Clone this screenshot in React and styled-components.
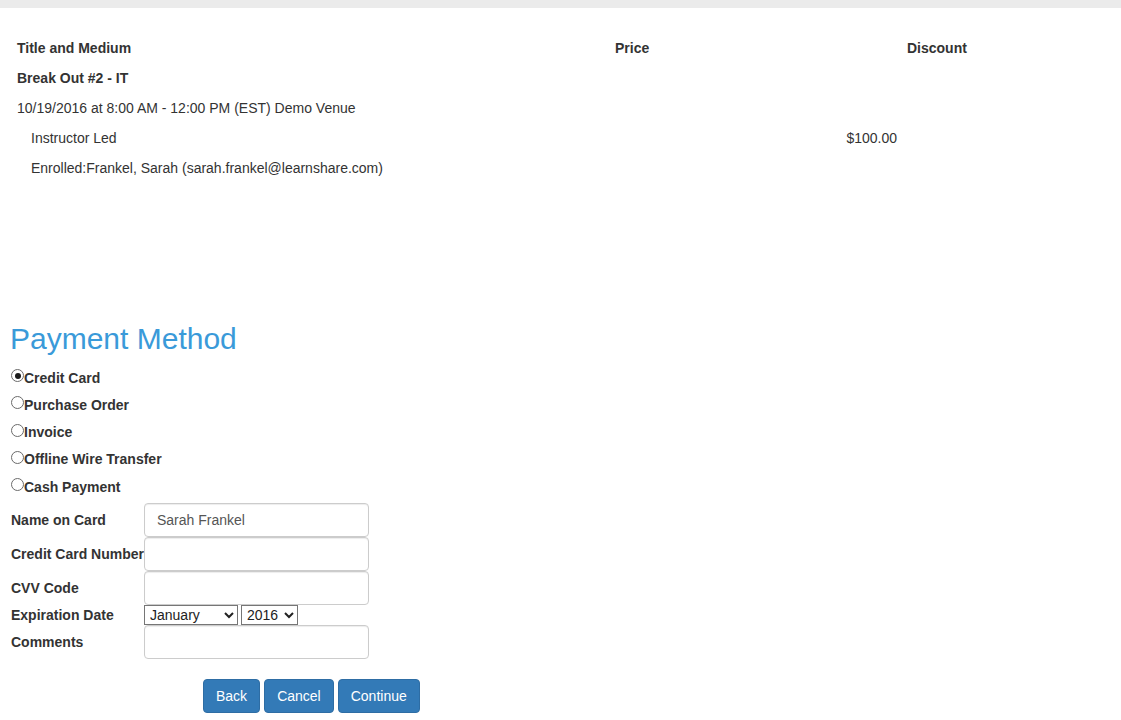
import React, { useState } from 'react'
import styled, { createGlobalStyle } from 'styled-components'

const GlobalStyle = createGlobalStyle`
  html, body {
    margin: 0;
    padding: 0;
    background: #fff;
  }
  body {
    font-family: "Liberation Sans", Arial, sans-serif;
    font-size: 14px;
    color: #333;
  }
`

const TopBar = styled.div`
  height: 8px;
  background-color: #ebebeb;
`

const Page = styled.div`
  padding: 25px 10px 0 10px;
`

const OrderTable = styled.div`
  display: grid;
  grid-template-columns: 598px 292px 1fr;
`

const Cell = styled.div`
  height: 30px;
  line-height: 30px;
  padding: 0 ${(p) => (p.right ? '3px' : '7px')};
  padding-left: ${(p) => (p.indent ? '21px' : p.right ? '0' : '7px')};
  font-weight: ${(p) => (p.bold ? 'bold' : 'normal')};
  text-align: ${(p) => (p.right ? 'right' : 'left')};
  white-space: nowrap;
`

const Heading = styled.h3`
  margin: 139px 0 0 0;
  font-size: 30px;
  font-weight: normal;
  line-height: 33px;
  color: #3a9ad9;
`

const RadioList = styled.div`
  margin-top: 9px;
  display: flex;
  flex-direction: column;
`

const RadioRow = styled.label`
  display: flex;
  align-items: center;
  height: 27.25px;
  font-weight: bold;
  cursor: pointer;
`

const Radio = styled.input`
  appearance: none;
  width: 13px;
  height: 13px;
  margin: 0 0 0 1px;
  border: 1px solid #6b6b6b;
  border-radius: 50%;
  background: #fff;
  position: relative;
  top: -2px;
  box-sizing: border-box;
  &:checked::after {
    content: '';
    position: absolute;
    left: 2.5px;
    top: 2.5px;
    width: 6px;
    height: 6px;
    border-radius: 50%;
    background: #1a1a1a;
  }
`

const FormGrid = styled.div`
  margin-top: 3px;
  display: grid;
  grid-template-columns: 134px 225px;
  align-items: center;
`

const FieldLabel = styled.div`
  padding-left: 1px;
  font-weight: bold;
  white-space: nowrap;
`

const TextInput = styled.input`
  box-sizing: border-box;
  width: 225px;
  height: 34px;
  padding: 6px 12px;
  font-family: inherit;
  font-size: 14px;
  color: #555;
  border: 1px solid #ccc;
  border-radius: 4px;
  box-shadow: inset 0 1px 1px rgba(0, 0, 0, 0.075);
  margin: 0;
  outline: none;
`

const SelectRow = styled.div`
  display: flex;
  gap: 3px;
  height: 20px;
`

const Select = styled.select`
  box-sizing: border-box;
  width: ${(p) => p.w}px;
  height: 20px;
  font-family: inherit;
  font-size: 14px;
  color: #222;
  border: 1px solid #767676;
  border-radius: 0;
  background: #fff;
  padding: 0 0 0 1px;
  margin: 0;
`

const ButtonBar = styled.div`
  margin: 20px 0 0 193px;
  display: flex;
  gap: 4px;
`

const Button = styled.button`
  height: 34px;
  padding: 6px 12px;
  font-family: inherit;
  font-size: 14px;
  color: #fff;
  background-color: #337ab7;
  border: 1px solid #2e6da4;
  border-radius: 4px;
  cursor: pointer;
`

const methods = ['Credit Card', 'Purchase Order', 'Invoice', 'Offline Wire Transfer', 'Cash Payment']
const months = ['January', 'February', 'March', 'April', 'May', 'June', 'July', 'August', 'September', 'October', 'November', 'December']
const years = ['2016', '2017', '2018', '2019', '2020', '2021']

export default function App() {
  const [method, setMethod] = useState('Credit Card')

  return (
    <>
      <GlobalStyle />
      <TopBar />
      <Page>
        <OrderTable>
          <Cell bold>Title and Medium</Cell>
          <Cell bold>Price</Cell>
          <Cell bold>Discount</Cell>

          <Cell bold>Break Out #2 - IT</Cell>
          <Cell />
          <Cell />

          <Cell>10/19/2016 at 8:00 AM - 12:00 PM (EST) Demo Venue</Cell>
          <Cell />
          <Cell />

          <Cell indent>Instructor Led</Cell>
          <Cell right>$100.00</Cell>
          <Cell />

          <Cell indent>Enrolled:Frankel, Sarah (sarah.frankel@learnshare.com)</Cell>
          <Cell />
          <Cell />
        </OrderTable>

        <Heading>Payment Method</Heading>
        <RadioList>
          {methods.map((m) => (
            <RadioRow key={m}>
              <Radio type="radio" name="method" checked={method === m} onChange={() => setMethod(m)} />
              {m}
            </RadioRow>
          ))}
        </RadioList>

        <FormGrid>
          <FieldLabel>Name on Card</FieldLabel>
          <TextInput defaultValue="Sarah Frankel" />
          <FieldLabel>Credit Card Number</FieldLabel>
          <TextInput />
          <FieldLabel>CVV Code</FieldLabel>
          <TextInput />
          <FieldLabel>Expiration Date</FieldLabel>
          <SelectRow>
            <Select w={94} defaultValue="January">
              {months.map((m) => <option key={m}>{m}</option>)}
            </Select>
            <Select w={57} defaultValue="2016">
              {years.map((y) => <option key={y}>{y}</option>)}
            </Select>
          </SelectRow>
          <FieldLabel>Comments</FieldLabel>
          <TextInput />
        </FormGrid>

        <ButtonBar>
          <Button>Back</Button>
          <Button>Cancel</Button>
          <Button>Continue</Button>
        </ButtonBar>
      </Page>
    </>
  )
}
